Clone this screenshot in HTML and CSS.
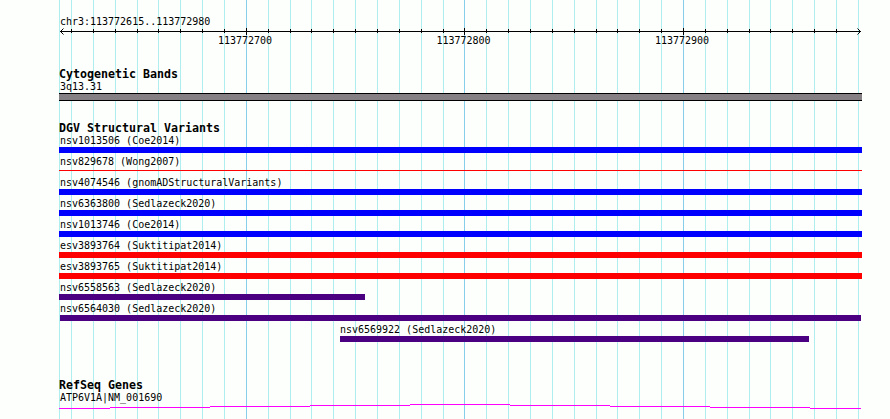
FILE: index.html
```
<!DOCTYPE html>
<html lang="en">
<head>
    <meta charset="UTF-8">
    <title>chr3:113772615..113772980</title>
    <link rel="stylesheet" href="styles.css">
</head>
<body>
    <div class="browser">
        <svg class="grid" width="890" height="419" shape-rendering="crispEdges">
            <path class="minor" d="M59.5 0v419M71.5 0v419M93.5 0v419M115.5 0v419M137.5 0v419M158.5 0v419M180.5 0v419M202.5 0v419M224.5 0v419M268.5 0v419M290.5 0v419M311.5 0v419M333.5 0v419M355.5 0v419M377.5 0v419M399.5 0v419M421.5 0v419M443.5 0v419M486.5 0v419M508.5 0v419M530.5 0v419M552.5 0v419M574.5 0v419M596.5 0v419M617.5 0v419M639.5 0v419M661.5 0v419M705.5 0v419M727.5 0v419M749.5 0v419M770.5 0v419M792.5 0v419M814.5 0v419M836.5 0v419M858.5 0v419"/>
            <path class="major" d="M246.5 0v419M464.5 0v419M683.5 0v419"/>
        </svg>

        <div class="ruler">
            <div class="label">chr3:113772615..113772980</div>
            <svg class="axis" width="803" height="7" shape-rendering="crispEdges">
                <path d="M1 3.5h801"/>
                <path d="M12.5 1v4M34.5 1v4M56.5 1v4M78.5 1v4M99.5 1v4M121.5 1v4M143.5 1v4M165.5 1v4M209.5 1v4M231.5 1v4M252.5 1v4M274.5 1v4M296.5 1v4M318.5 1v4M340.5 1v4M362.5 1v4M384.5 1v4M427.5 1v4M449.5 1v4M471.5 1v4M493.5 1v4M515.5 1v4M537.5 1v4M558.5 1v4M580.5 1v4M602.5 1v4M646.5 1v4M668.5 1v4M690.5 1v4M711.5 1v4M733.5 1v4M755.5 1v4M777.5 1v4"/>
                <path d="M187.5 0v7M405.5 0v7M624.5 0v7"/>
                <path class="arrow" d="M4.5 .5l-3 3l3 3M798.5 .5l3 3l-3 3"/>
            </svg>
            <div class="numbers">
                <span>113772700</span>
                <span>113772800</span>
                <span>113772900</span>
            </div>
        </div>

        <div class="track bands">
            <h2>Cytogenetic Bands</h2>
            <div class="label">3q13.31</div>
            <div class="band"></div>
        </div>

        <div class="track variants">
            <h2>DGV Structural Variants</h2>
            <div class="variant gain">nsv1013506 (Coe2014)</div>
            <div class="variant loss thin">nsv829678 (Wong2007)</div>
            <div class="variant gain">nsv4074546 (gnomADStructuralVariants)</div>
            <div class="variant gain">nsv6363800 (Sedlazeck2020)</div>
            <div class="variant gain">nsv1013746 (Coe2014)</div>
            <div class="variant loss">esv3893764 (Suktitipat2014)</div>
            <div class="variant loss">esv3893765 (Suktitipat2014)</div>
            <div class="variant other short">nsv6558563 (Sedlazeck2020)</div>
            <div class="variant other full">nsv6564030 (Sedlazeck2020)</div>
            <div class="variant other right">nsv6569922 (Sedlazeck2020)</div>
        </div>

        <div class="track genes">
            <h2>RefSeq Genes</h2>
            <div class="label">ATP6V1A|NM_001690</div>
            <svg class="gene" width="803" height="5" shape-rendering="crispEdges">
                <path d="M0 4.5h51M51 3.5h100M151 2.5h100M251 1.5h100M351 .5h100M451 1.5h100M551 2.5h100M651 3.5h100M751 4.5h51"/>
            </svg>
        </div>
    </div>
</body>
</html>
```
FILE: styles.css
```
body {
    margin: 0;
    background-color: #fdfffc;
    color: #000;
    font-family: "DejaVu Sans Mono", monospace;
    font-size: 10px;
    line-height: 14px;
    letter-spacing: -0.01px;
    white-space: nowrap;
}

svg {
    display: block;
    fill: none;
    stroke: #000;
}

.browser {
    position: relative;
    box-sizing: border-box;
    width: 890px;
    height: 419px;
    padding: 15px 28px 0 59px;
    overflow: hidden;
}

.grid {
    position: absolute;
    top: 0;
    left: 0;
    z-index: -1;
}

.minor {
    stroke: #afeeee;
}

.major {
    stroke: #87ceeb;
}

.label {
    height: 12px;
    padding-left: 1px;
}

.ruler {
    height: 53px;
}

.axis {
    margin-top: 1px;
}

.arrow {
    shape-rendering: auto;
}

.numbers {
    display: flex;
    gap: 164px;
    margin-top: -1px;
    padding-left: 159px;
}

.numbers span {
    width: 54.5px;
}

h2 {
    margin: 0;
    height: 12px;
    font-size: 11.63px;
    font-weight: bold;
    line-height: 12px;
    letter-spacing: 0;
}

.bands {
    height: 54px;
}

.band {
    box-sizing: border-box;
    height: 8px;
    margin-top: 1px;
    border: solid #000;
    border-width: 1px 0;
    background-color: #848083;
}

.variants {
    height: 257px;
}

.variant {
    box-sizing: border-box;
    height: 19px;
    margin-bottom: 2px;
    padding-left: 1px;
    border-bottom: 6px solid;
}

.gain {
    border-color: #00f;
}

.loss {
    border-color: #f00;
}

.other {
    border-color: #4b0082;
}

.thin {
    height: 16px;
    margin-bottom: 5px;
    border-bottom-width: 1px;
}

.short {
    width: 306px;
}

.full {
    margin-left: 1px;
    margin-right: 1px;
    padding-left: 0;
}

.right {
    width: 469px;
    margin-left: 281px;
    padding-left: 0;
}

.gene {
    margin-top: 1px;
    stroke: #f0f;
}
```
